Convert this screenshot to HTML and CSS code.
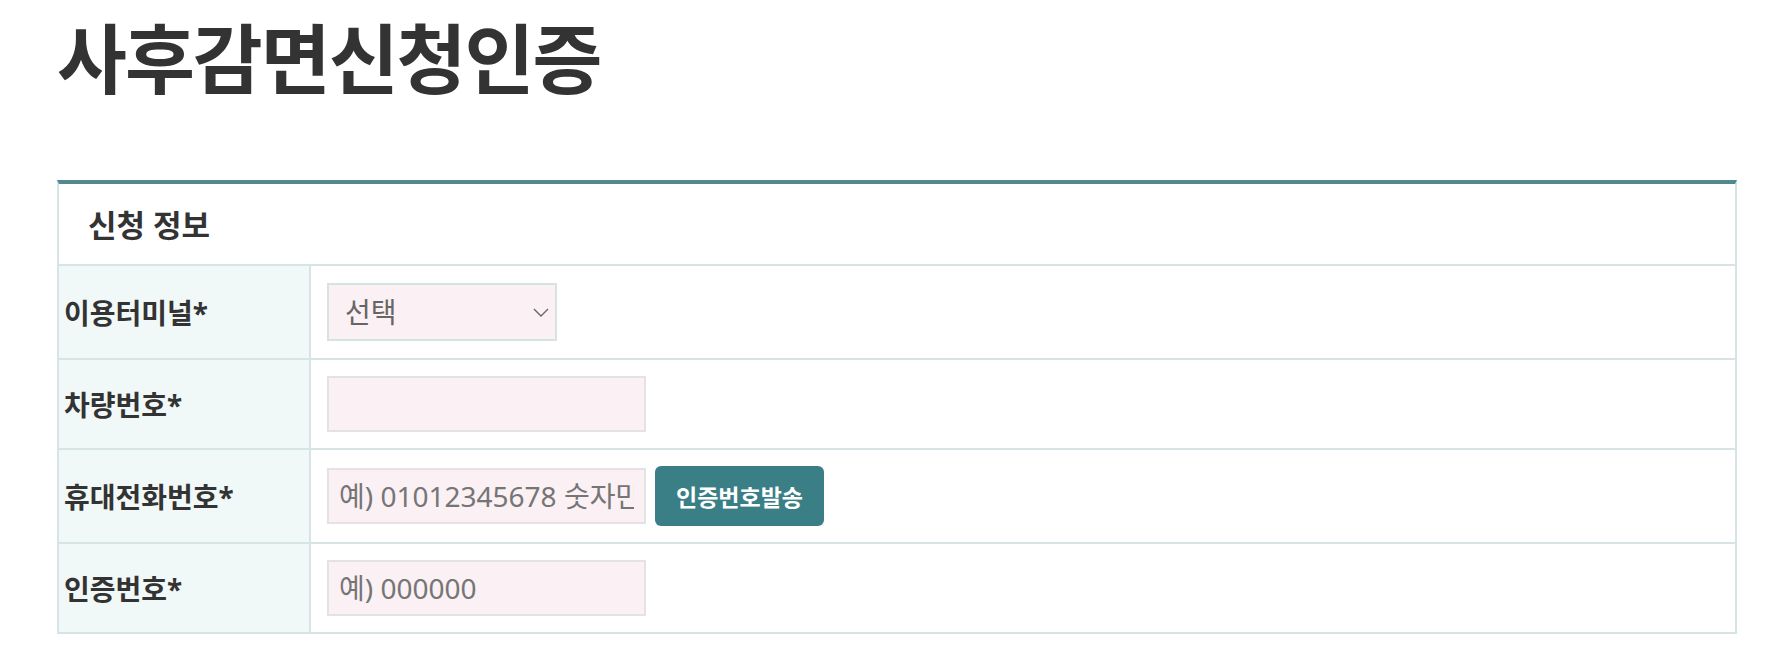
FILE: index.html
```html
<!DOCTYPE html>
<html lang="ko">

<head>
    <meta charset="UTF-8">
    <meta name="viewport" content="width=device-width, initial-scale=1.0">
    <title>사후감면신청인증</title>
    <link rel="stylesheet" href="styles.css">
</head>

<body>
    <div class="container">
        <h1>사후감면신청인증</h1>

        <div class="form-box">
            <div class="box-title">신청 정보</div>

            <div class="form-row">
                <div class="row-label">이용터미널*</div>
                <div class="row-field">
                    <div class="select-wrap">
                        <select id="terminal">
                            <option value="">선택</option>
                        </select>
                        <svg class="chevron" width="16" height="9" viewBox="0 0 16 9">
                            <path d="M1 1l7 7 7-7" fill="none" stroke="#666" stroke-width="1.4"/>
                        </svg>
                    </div>
                </div>
            </div>

            <div class="form-row">
                <div class="row-label">차량번호*</div>
                <div class="row-field">
                    <input type="text" id="car-number">
                </div>
            </div>

            <div class="form-row">
                <div class="row-label">휴대전화번호*</div>
                <div class="row-field">
                    <input type="text" id="phone" placeholder="예) 01012345678 숫자만 입력">
                    <button type="button" class="btn-send">인증번호발송</button>
                </div>
            </div>

            <div class="form-row">
                <div class="row-label">인증번호*</div>
                <div class="row-field">
                    <input type="text" id="auth-code" placeholder="예) 000000">
                </div>
            </div>
        </div>
    </div>
</body>

</html>
```

FILE: styles.css
```css
body {
    margin: 0;
    font-family: "Noto Sans", "Noto Sans CJK KR", sans-serif;
    color: #333;
    background-color: #fff;
}

.container {
    padding: 8px 0 0 57px;
}

h1 {
    margin: 0 0 69px;
    font-size: 76px;
    line-height: 1.35;
    font-weight: 700;
    letter-spacing: -2px;
    color: #333;
}

.form-box {
    width: 1680px;
    box-sizing: border-box;
    border: 2px solid #d6e4e5;
    border-top: 4px solid #508a8f;
}

.box-title {
    height: 80px;
    display: flex;
    align-items: center;
    padding-left: 29px;
    font-size: 31px;
    font-weight: 700;
    border-bottom: 2px solid #d6e4e5;
}

.form-row {
    display: flex;
    border-bottom: 2px solid #d6e4e5;
}

.form-row:last-child {
    border-bottom: none;
}

.row-label {
    width: 252px;
    flex-shrink: 0;
    display: flex;
    align-items: center;
    padding-left: 5px;
    box-sizing: border-box;
    background-color: #f0f8f8;
    border-right: 2px solid #d6e4e5;
    font-size: 28px;
    font-weight: 700;
}

.row-field {
    display: flex;
    align-items: center;
    gap: 9px;
    padding: 16px;
}

input {
    width: 319px;
    height: 56px;
    box-sizing: border-box;
    padding: 0 10px;
    border: 2px solid #e3e3e3;
    background-color: #fbf0f4;
    font-family: inherit;
    font-size: 28px;
    color: #333;
    outline: none;
}

input::placeholder {
    color: #757575;
}

.select-wrap {
    position: relative;
    margin: 1px 0;
}

select {
    width: 230px;
    height: 58px;
    box-sizing: border-box;
    padding: 0 16px;
    border: 2px solid #d5e3e4;
    border-radius: 0;
    background-color: #fbf0f4;
    font-family: inherit;
    font-size: 28px;
    color: #666;
    appearance: none;
    outline: none;
}

.chevron {
    position: absolute;
    right: 8px;
    top: 25px;
    pointer-events: none;
}

.btn-send {
    width: 169px;
    height: 60px;
    padding: 0;
    border: none;
    border-radius: 6px;
    background-color: #3a7f86;
    color: #fff;
    font-family: inherit;
    font-size: 23px;
    font-weight: 700;
    cursor: pointer;
}
```
